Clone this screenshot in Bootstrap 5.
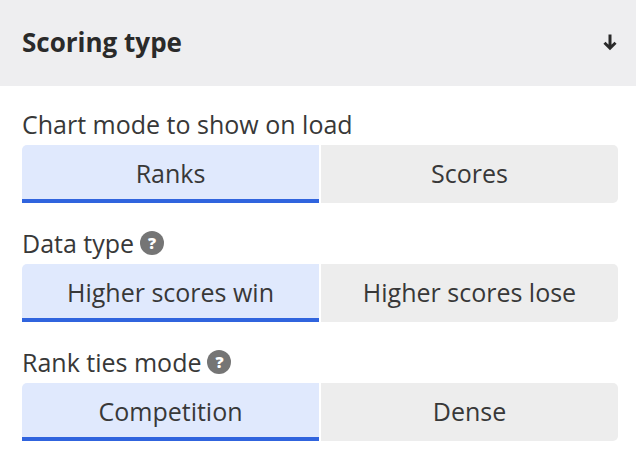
<!DOCTYPE html>
<html lang="en">
<head>
<meta charset="utf-8">
<meta name="viewport" content="width=device-width, initial-scale=1">
<title>Scoring type</title>
<link href="https://cdn.jsdelivr.net/npm/bootstrap@5.3.0/dist/css/bootstrap.min.css" rel="stylesheet">
<style>
  body { font-family: "Open Sans", sans-serif; font-size: 25px; line-height: 34px; color: #383838; background: #fff; }
  .panel-head { background: #eeeef0; color: #2a2a2a; padding: 24px 18px 26px 22px; border: 0; }
  .panel-head h2 { font-size: 26px; line-height: 36px; font-weight: 700; }
  .settings { padding: 21px 18px 13px 22px; gap: 23px; }
  .setting-name { gap: 6px; margin-bottom: 4px; }
  .help { width: 24px; height: 24px; background: #757575; color: #fff; font-size: 16px; line-height: 24px; font-weight: 800; }
  .choices { gap: 2px; }
  .choices .btn {
    --bs-btn-color: #383838; --bs-btn-bg: #ededed; --bs-btn-hover-color: #383838; --bs-btn-hover-bg: #e4e4e4;
    --bs-btn-active-color: #383838; --bs-btn-active-bg: #e0e9fd;
    flex: 1 1 0; padding: 11px 0 13px; font-size: 25px; line-height: 34px; border: 0; border-radius: 0;
  }
  .choices .btn:first-of-type { border-radius: 5px 0 0 5px; }
  .choices .btn:last-of-type { border-radius: 0 5px 5px 0; }
  .choices .btn-check:checked + .btn { box-shadow: inset 0 -4px #3064de; border-bottom-left-radius: 0; border-bottom-right-radius: 0; }
</style>
<script src="https://cdn.jsdelivr.net/npm/bootstrap@5.3.0/dist/js/bootstrap.bundle.min.js" defer></script>
</head>
<body>
<main>
  <header class="panel-head d-flex align-items-center justify-content-between">
    <h2 class="m-0">Scoring type</h2>
    <button type="button" class="btn p-0 border-0 d-flex" aria-label="Collapse scoring type">
      <svg width="16" height="20" viewBox="0 0 16 20" fill="none" stroke="#2a2a2a" stroke-width="3" aria-hidden="true"><path d="M8 2.5V16M2.5 10.8L8 16.2L13.5 10.8"/></svg>
    </button>
  </header>
  <form class="settings d-flex flex-column">
    <div role="radiogroup" aria-labelledby="mode-name">
      <div class="setting-name d-flex align-items-center"><span id="mode-name">Chart mode to show on load</span></div>
      <div class="choices d-flex">
        <input class="btn-check" type="radio" name="mode" id="ranks" checked><label class="btn" for="ranks">Ranks</label>
        <input class="btn-check" type="radio" name="mode" id="scores"><label class="btn" for="scores">Scores</label>
      </div>
    </div>
    <div role="radiogroup" aria-labelledby="data-name">
      <div class="setting-name d-flex align-items-center"><span id="data-name">Data type</span>
        <button type="button" class="help border-0 p-0 rounded-circle" aria-label="Help on data type">?</button></div>
      <div class="choices d-flex">
        <input class="btn-check" type="radio" name="data" id="win" checked><label class="btn" for="win">Higher scores win</label>
        <input class="btn-check" type="radio" name="data" id="lose"><label class="btn" for="lose">Higher scores lose</label>
      </div>
    </div>
    <div role="radiogroup" aria-labelledby="ties-name">
      <div class="setting-name d-flex align-items-center"><span id="ties-name">Rank ties mode</span>
        <button type="button" class="help border-0 p-0 rounded-circle" aria-label="Help on rank ties mode">?</button></div>
      <div class="choices d-flex">
        <input class="btn-check" type="radio" name="ties" id="competition" checked><label class="btn" for="competition">Competition</label>
        <input class="btn-check" type="radio" name="ties" id="dense"><label class="btn" for="dense">Dense</label>
      </div>
    </div>
  </form>
</main>
</body>
</html>
